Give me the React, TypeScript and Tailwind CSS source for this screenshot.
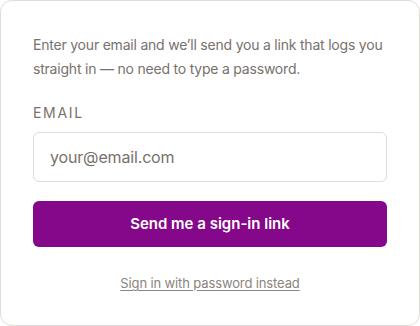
export default function App() {
  return (
    <div className="h-[326px] w-[420px] bg-white" style={{ fontFamily: "Inter, 'Noto Sans', sans-serif" }}>
      <div className="box-border flex h-full w-full flex-col rounded-xl border border-[#e0ddd6] bg-white px-8 pt-8">
        <p className="mb-[22px] text-[14px] leading-6 tracking-[-0.015em] text-[#78716c]">
          Enter your email and we’ll send you a link that logs you straight in — no need to type a password.
        </p>

        <label className="mb-[9px] text-[14px] uppercase leading-5 tracking-[0.12em] text-[#78716c]">
          Email
        </label>

        <input
          type="email"
          placeholder="your@email.com"
          className="h-[50px] w-full rounded-md border border-[#e0ddd6] bg-white px-4 text-[16px] tracking-[-0.01em] text-[#44403c] outline-none placeholder:text-[#78716c]"
        />

        <button className="mt-[19px] h-[46px] w-full rounded-md bg-[#85088a] text-[15px] font-semibold text-white">
          Send me a sign-in link
        </button>

        <div className="mt-[23px] text-center">
          <a href="#" className="text-[13px] leading-5 tracking-[-0.01em] text-[#8a847e] underline underline-offset-2">
            Sign in with password instead
          </a>
        </div>
      </div>
    </div>
  );
}
